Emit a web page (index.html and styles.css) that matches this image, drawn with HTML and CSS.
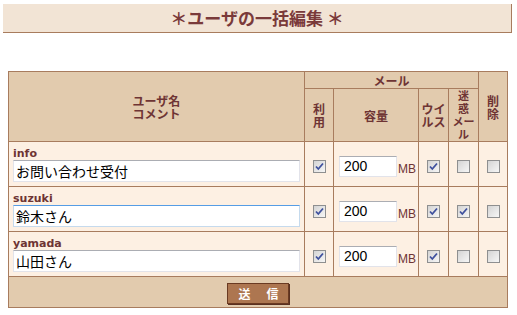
FILE: index.html
```html
<!DOCTYPE html>
<html lang="ja">
<head>
   <meta charset="UTF-8">
   <title>ユーザの一括編集</title>
   <link rel="stylesheet" href="styles.css">
</head>
<body>

   <h1 class="page-title">＊ユーザの一括編集 ＊</h1>

   <form class="bulk-form">
      <table class="user-table">
         <colgroup>
            <col class="c-name">
            <col class="c-use">
            <col class="c-size">
            <col class="c-virus">
            <col class="c-spam">
            <col class="c-del">
         </colgroup>
         <thead>
            <tr class="head-top">
               <th rowspan="2">ユーザ名<br>コメント</th>
               <th colspan="4">メール</th>
               <th rowspan="2">削<br>除</th>
            </tr>
            <tr class="head-sub">
               <th>利<br>用</th>
               <th>容量</th>
               <th>ウイ<br>ルス</th>
               <th class="tight">迷<br>惑<br>メー<br>ル</th>
            </tr>
         </thead>
         <tbody>
            <tr>
               <td class="name-cell">
                  <div class="user-id">info</div>
                  <input class="comment" type="text" value="お問い合わせ受付">
               </td>
               <td class="box-cell"><span class="cb on"><svg viewBox="0 0 11 11"><path d="M2 5.5 L4.3 8 L9 2.5" /></svg></span></td>
               <td class="size-cell"><input class="size" type="text" value="200"><span class="unit">MB</span></td>
               <td class="box-cell"><span class="cb on"><svg viewBox="0 0 11 11"><path d="M2 5.5 L4.3 8 L9 2.5" /></svg></span></td>
               <td class="box-cell"><span class="cb"></span></td>
               <td class="box-cell"><span class="cb"></span></td>
            </tr>
            <tr>
               <td class="name-cell">
                  <div class="user-id">suzuki</div>
                  <input class="comment focus" type="text" value="鈴木さん">
               </td>
               <td class="box-cell"><span class="cb on"><svg viewBox="0 0 11 11"><path d="M2 5.5 L4.3 8 L9 2.5" /></svg></span></td>
               <td class="size-cell"><input class="size" type="text" value="200"><span class="unit">MB</span></td>
               <td class="box-cell"><span class="cb on"><svg viewBox="0 0 11 11"><path d="M2 5.5 L4.3 8 L9 2.5" /></svg></span></td>
               <td class="box-cell"><span class="cb on"><svg viewBox="0 0 11 11"><path d="M2 5.5 L4.3 8 L9 2.5" /></svg></span></td>
               <td class="box-cell"><span class="cb"></span></td>
            </tr>
            <tr>
               <td class="name-cell">
                  <div class="user-id">yamada</div>
                  <input class="comment" type="text" value="山田さん">
               </td>
               <td class="box-cell"><span class="cb on"><svg viewBox="0 0 11 11"><path d="M2 5.5 L4.3 8 L9 2.5" /></svg></span></td>
               <td class="size-cell"><input class="size" type="text" value="200"><span class="unit">MB</span></td>
               <td class="box-cell"><span class="cb on"><svg viewBox="0 0 11 11"><path d="M2 5.5 L4.3 8 L9 2.5" /></svg></span></td>
               <td class="box-cell"><span class="cb"></span></td>
               <td class="box-cell"><span class="cb"></span></td>
            </tr>
         </tbody>
         <tfoot>
            <tr class="foot-row">
               <td colspan="6" class="foot-cell">
                  <button type="button" class="send-btn">送　信</button>
               </td>
            </tr>
         </tfoot>
      </table>
   </form>

</body>
</html>
```

FILE: styles.css
```css
body {
   margin: 0;
   padding: 4px 5px 0 3px;
   background-color: #fff;
   font-family: "Noto Sans CJK JP", sans-serif;
}

.page-title {
   margin: 0;
   height: 28px;
   line-height: 28px;
   background-color: #f2e4d5;
   border-right: 1px solid #a87c5e;
   border-bottom: 1px solid #a87c5e;
   text-align: center;
   color: #7a3a3a;
   font-size: 17px;
   font-weight: bold;
}

.bulk-form {
   margin: 38px 0 0 5px;
}

.user-table {
   width: 500px;
   table-layout: fixed;
   border-collapse: collapse;
   border: 1px solid #a87c5e;
}

.c-name { width: 296px; }
.c-use { width: 29px; }
.c-size { width: 85px; }
.c-virus { width: 30px; }
.c-spam { width: 30px; }
.c-del { width: 29px; }

.user-table th,
.user-table td {
   border: 1px solid #a87c5e;
   padding: 0;
}

.user-table th {
   background-color: #e2cbae;
   color: #6e3434;
   font-size: 12px;
   font-weight: bold;
   line-height: 13px;
   text-align: center;
   vertical-align: middle;
}

.user-table th.tight {
   font-size: 11px;
   line-height: 13px;
}

.head-top {
   height: 17px;
}

.head-sub {
   height: 53px;
}

.user-table tbody tr {
   height: 45px;
}

.user-table td {
   background-color: #fdf0e3;
   vertical-align: middle;
}

.user-table .name-cell {
   padding: 4px;
}

.user-id {
   font-family: "DejaVu Sans", sans-serif;
   font-weight: bold;
   font-size: 11px;
   line-height: 13px;
   color: #6e3434;
}

.comment {
   display: block;
   box-sizing: border-box;
   width: 100%;
   height: 22px;
   margin: 0;
   padding: 0 2px;
   border: 1px solid #e2e3ea;
   border-top-color: #abadb3;
   background: #fff;
   font-family: "Noto Sans CJK JP", sans-serif;
   font-size: 14px;
   line-height: 20px;
   color: #000;
   outline: none;
}

.comment.focus {
   border-color: #c5daed;
   border-top-color: #569de5;
}

.box-cell {
   text-align: center;
}

.cb {
   display: inline-block;
   box-sizing: border-box;
   width: 13px;
   height: 13px;
   border: 1px solid #8e8f90;
   background: linear-gradient(135deg, #d4d4d4, #f6f6f6);
   vertical-align: middle;
}

.cb svg {
   display: block;
   width: 11px;
   height: 11px;
}

.cb path {
   fill: none;
   stroke: #3f519e;
   stroke-width: 1.8;
}

.user-table .size-cell {
   padding: 0 0 0 5px;
   white-space: nowrap;
}

.size {
   box-sizing: border-box;
   width: 58px;
   height: 21px;
   margin: 0;
   padding: 0 4px;
   border: 1px solid #e2e3ea;
   border-top-color: #abadb3;
   font-family: "Liberation Sans", Arial, sans-serif;
   font-size: 14px;
   color: #000;
   vertical-align: middle;
}

.unit {
   display: inline-block;
   margin-left: 1px;
   padding-top: 6px;
   font-family: "Liberation Sans", Arial, sans-serif;
   font-size: 12px;
   color: #6e3434;
   vertical-align: middle;
}

.foot-row {
   height: 31px;
}

.user-table .foot-cell {
   background-color: #e2cbae;
   text-align: center;
}

.send-btn {
   display: inline-block;
   width: 62px;
   height: 21px;
   margin: 0 auto;
   padding: 0 0 0 3px;
   background-color: #ad7650;
   border: 1px solid #6a3a22;
   box-shadow: 1px 1px 0 #5a3020;
   color: #fff;
   font-family: "Noto Sans CJK JP", sans-serif;
   font-size: 12px;
   font-weight: bold;
   letter-spacing: 2px;
   line-height: 19px;
   cursor: pointer;
}
```
